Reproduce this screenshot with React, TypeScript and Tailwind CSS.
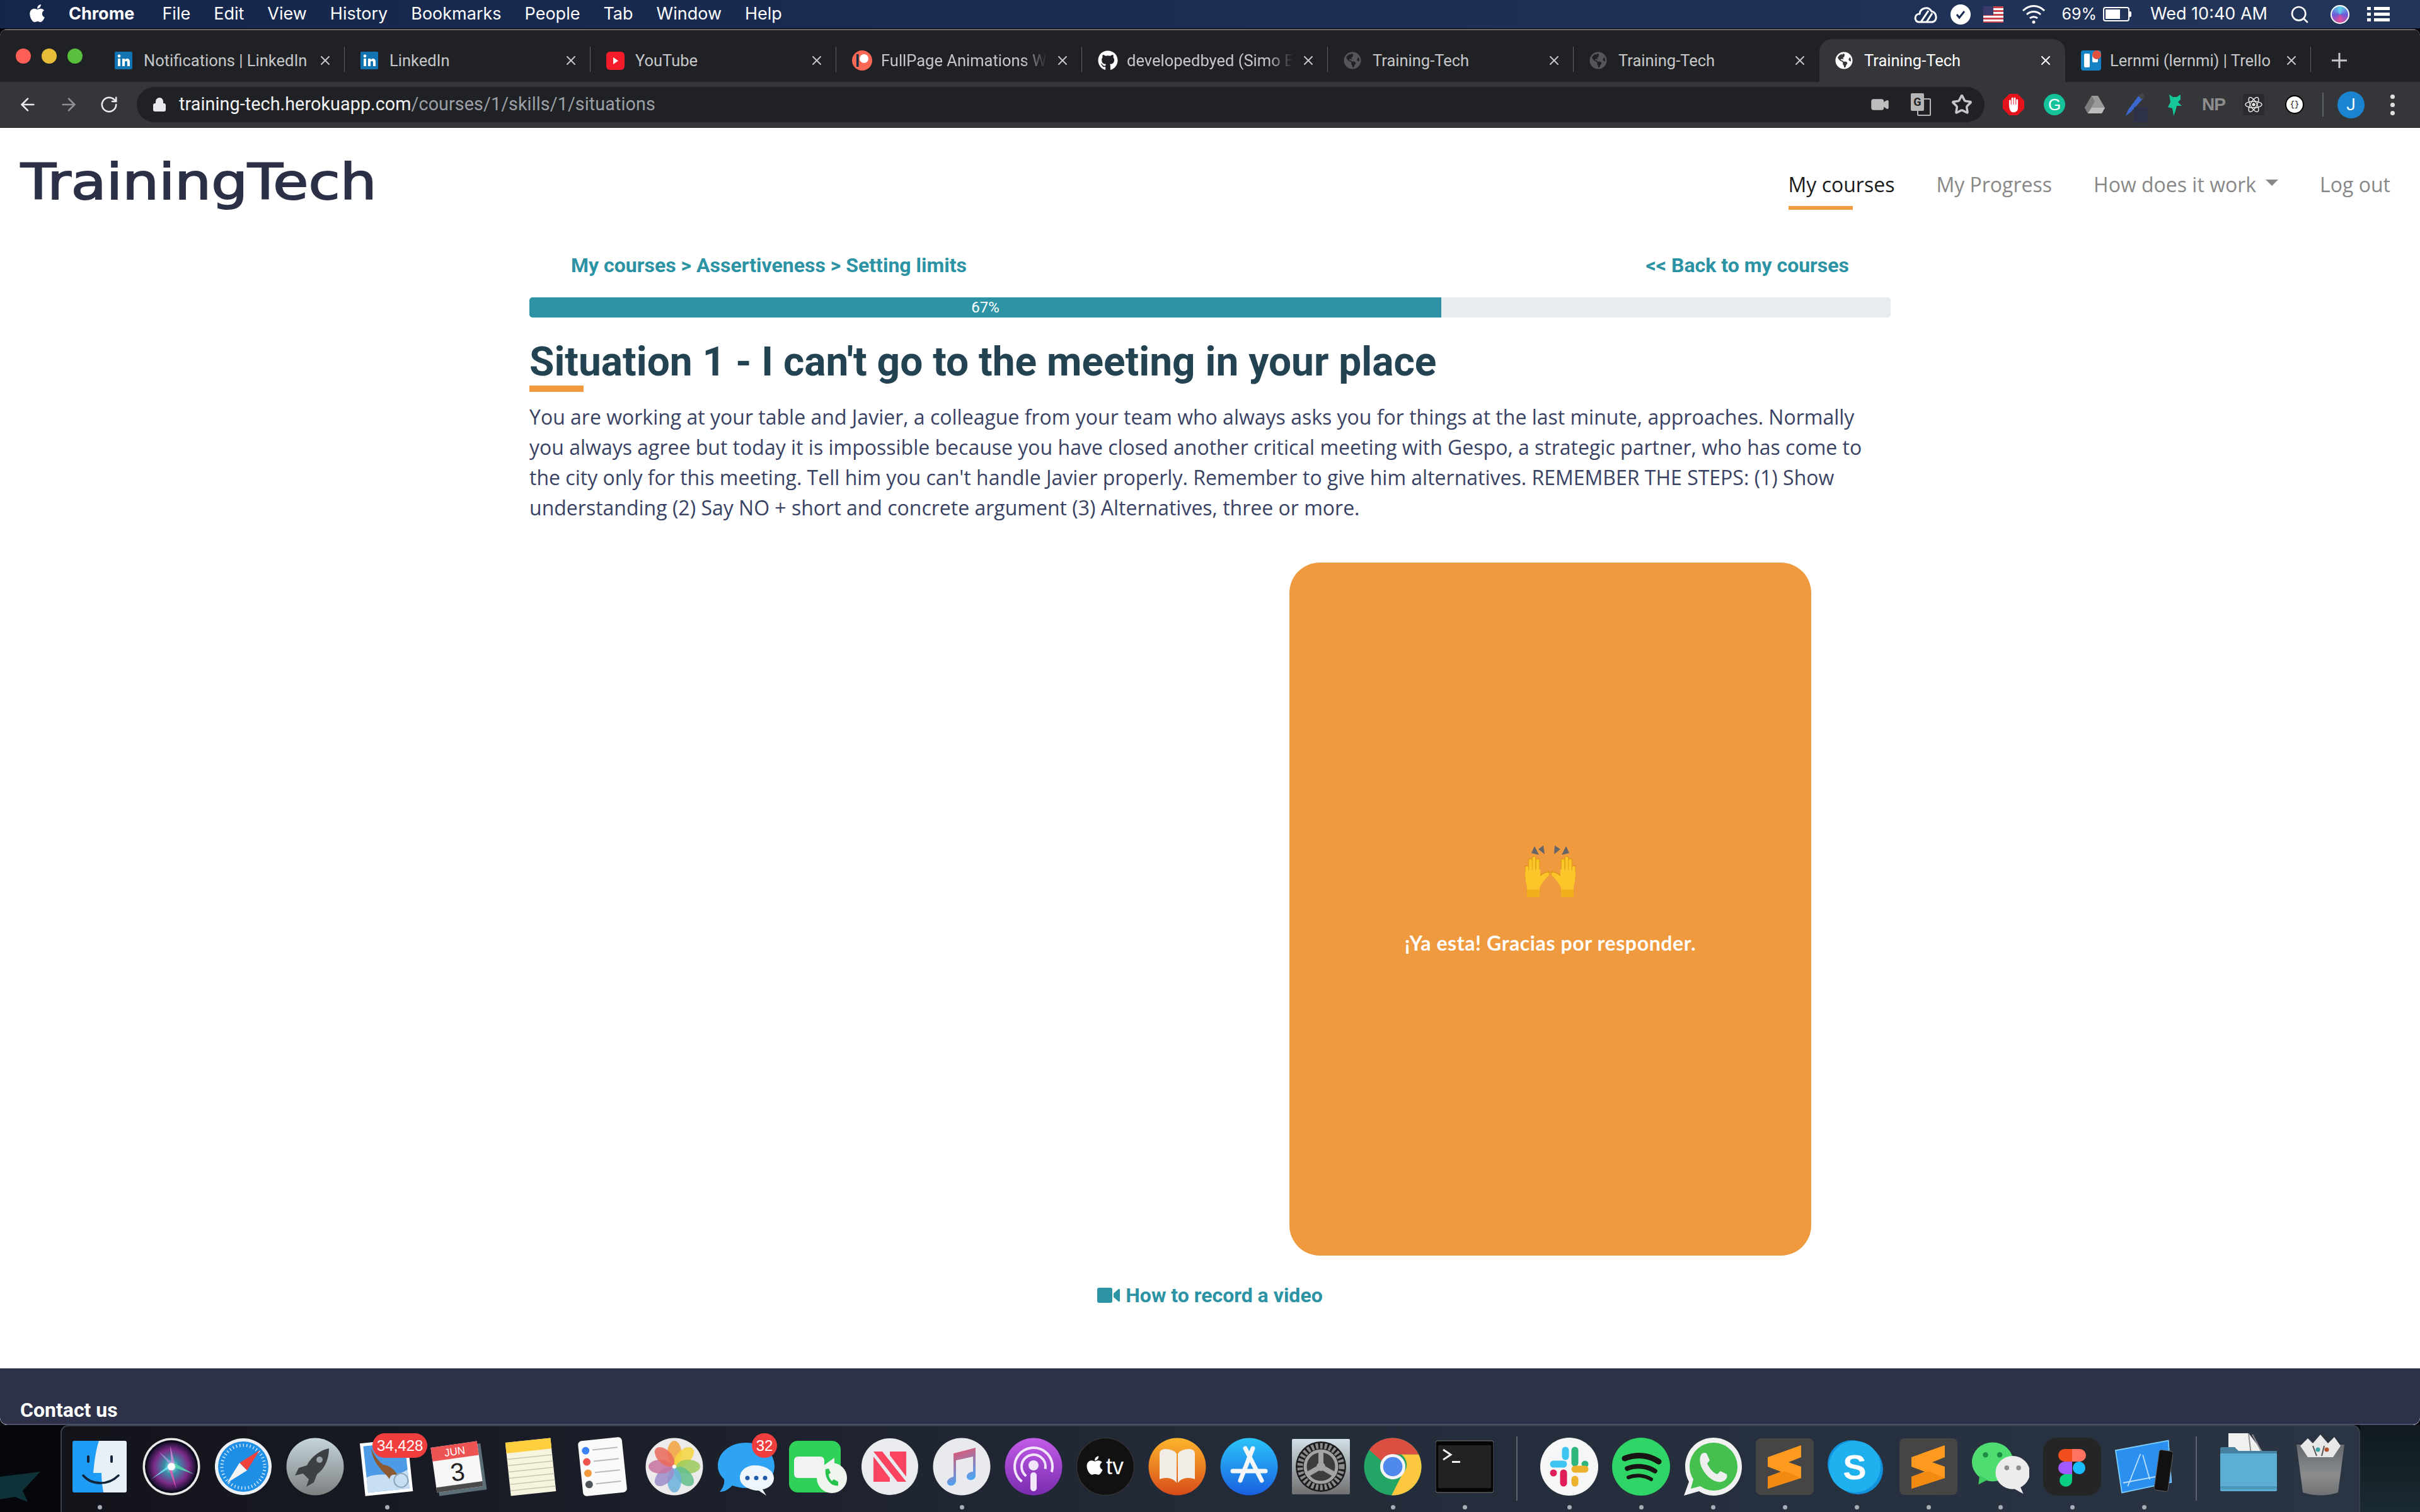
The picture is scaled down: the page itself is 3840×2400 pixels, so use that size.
import React from "react";
import { ArrowLeft, ArrowRight, Lock, RotateCw, Search, Star, Video, X } from "lucide-react";
import { FaApple, FaGithub, FaGlobeAmericas } from "react-icons/fa";

const Sublime = () => (
  <svg viewBox="0 0 92 92" className="w-full h-full">
    <rect x="0" y="1" width="92" height="90" rx="8" fill="#454545" />
    <path d="M72 12 V31 L52 39 L72 46 V64 L19 81 V62 L40 54 L19 46 V31Z" fill="#ff9a1f" />
    <path d="M72 64 L19 81 V62 L46 53Z" fill="#f28a12" />
  </svg>
);

const dockItems: { name: string; dot: boolean; icon: React.ReactNode; gapBefore?: boolean }[] = [
  {
    name: "Finder",
    dot: true,
    icon: (
      <svg viewBox="0 0 92 92" className="w-full h-full">
        <rect x="3" y="5" width="86" height="82" rx="3" fill="#1f9cf5" />
        <path d="M45 5 H86 a3 3 0 0 1 3 3 V84 a3 3 0 0 1 -3 3 H52 C50 74 49 66 49 56 H36 C38 36 40 20 45 5Z" fill="#e8f0f7" />
        <rect x="26" y="28" width="4" height="12" rx="2" fill="#12233a" />
        <rect x="63" y="28" width="4" height="12" rx="2" fill="#12233a" />
        <path d="M20 60 C34 76 60 76 76 60" stroke="#12233a" strokeWidth="3.5" fill="none" strokeLinecap="round" />
      </svg>
    ),
  },
  {
    name: "Siri",
    dot: false,
    icon: (
      <svg viewBox="0 0 92 92" className="w-full h-full">
        <defs>
          <radialGradient id="siriBg">
            <stop offset="0" stopColor="#9ff6ff" />
            <stop offset="0.3" stopColor="#3a8fa8" />
            <stop offset="0.7" stopColor="#7b2a86" />
            <stop offset="1" stopColor="#1a1030" />
          </radialGradient>
        </defs>
        <circle cx="46" cy="46" r="45.5" fill="#e8e8e8" />
        <circle cx="46" cy="46" r="42" fill="#0c0a1a" />
        <circle cx="46" cy="46" r="39" fill="url(#siriBg)" />
        <path d="M46 46 L44 12 L52 44Z" fill="#d88ad8" opacity="0.8" />
        <path d="M46 46 L82 58 L50 40Z" fill="#58e0b0" opacity="0.8" />
        <path d="M46 46 L54 82 L42 50Z" fill="#e85ab0" opacity="0.85" />
        <path d="M46 46 L14 66 L44 42Z" fill="#6fe8f5" opacity="0.85" />
        <path d="M46 46 L26 22 L50 42Z" fill="#b8a0e8" opacity="0.7" />
        <circle cx="46" cy="46" r="6" fill="#fff" />
      </svg>
    ),
  },
  {
    name: "Safari",
    dot: false,
    icon: (
      <svg viewBox="0 0 92 92" className="w-full h-full">
        <circle cx="46" cy="46" r="45" fill="#eef1f4" />
        <circle cx="46" cy="46" r="40" fill="#1f8fe6" />
        <circle cx="46" cy="46" r="34" fill="none" stroke="#cfe8fb" strokeWidth="5" strokeDasharray="1.5 4" />
        <path d="M72 20 L52 52 L40 40Z" fill="#f0413c" />
        <path d="M20 72 L40 40 L52 52Z" fill="#f4f4f4" />
      </svg>
    ),
  },
  {
    name: "Launchpad",
    dot: false,
    icon: (
      <svg viewBox="0 0 92 92" className="w-full h-full">
        <defs>
          <linearGradient id="lpBg" x1="0" y1="0" x2="0" y2="1">
            <stop offset="0" stopColor="#c5d6dc" />
            <stop offset="1" stopColor="#7d7f80" />
          </linearGradient>
        </defs>
        <circle cx="46" cy="46" r="45.5" fill="url(#lpBg)" />
        <path d="M68 17 C54 20 40 30 33 44 L20 48 L14 60 L27 57 L36 66 L32 78 L44 71 L49 58 C61 50 68 34 68 17Z" fill="#3e4144" />
        <circle cx="53" cy="35" r="5" fill="#9aa3a8" />
      </svg>
    ),
  },
  {
    name: "Mail",
    dot: true,
    icon: (
      <svg viewBox="0 0 92 92" className="w-full h-full">
        <g transform="rotate(-6 46 46)">
          <rect x="7" y="5" width="76" height="84" fill="#fff" />
          <rect x="12" y="10" width="66" height="74" fill="#4d9be6" />
          <path d="M12 60 C30 52 60 66 78 54 V84 H12Z" fill="#c8def2" />
          <path d="M24 14 C28 28 34 36 40 42 C50 44 58 52 62 62 C54 58 50 60 48 66 C44 58 38 54 34 46 C28 38 24 26 24 14Z" fill="#8b5a33" />
          <circle cx="66" cy="70" r="11" fill="none" stroke="#8ba5bd" strokeWidth="2" />
        </g>
      </svg>
    ),
  },
  {
    name: "Calendar",
    dot: false,
    icon: (
      <svg viewBox="0 0 92 92" className="w-full h-full">
        <g transform="rotate(-8 46 46)">
          <rect x="9" y="14" width="76" height="74" fill="#5c6e78" />
          <rect x="6" y="10" width="74" height="72" fill="#f7f7f7" />
          <rect x="6" y="10" width="74" height="22" fill="#ed5353" />
          <rect x="6" y="74" width="74" height="8" fill="#4b4b4b" />
          <text x="43" y="27" textAnchor="middle" fontFamily="'Liberation Sans',sans-serif" fontSize="17" fill="#fff">JUN</text>
          <text x="43" y="68" textAnchor="middle" fontFamily="'Liberation Sans',sans-serif" fontSize="40" fill="#222">3</text>
        </g>
      </svg>
    ),
  },
  {
    name: "Notes",
    dot: false,
    icon: (
      <svg viewBox="0 0 92 92" className="w-full h-full">
        <g transform="rotate(-6 46 46)">
          <rect x="10" y="4" width="72" height="85" fill="#f6f3df" />
          <rect x="10" y="4" width="72" height="17" fill="#fdcf3f" />
          {[30, 40, 50, 60, 70, 80].map((y) => (
            <rect key={y} x="10" y={y} width="72" height="1.5" fill="#c9c5ad" />
          ))}
        </g>
      </svg>
    ),
  },
  {
    name: "Reminders",
    dot: false,
    icon: (
      <svg viewBox="0 0 92 92" className="w-full h-full">
        <g transform="rotate(-6 46 46)">
          <rect x="11" y="2" width="70" height="88" rx="6" fill="#fafafa" />
          {[
            [18, "#3b82f6"],
            [36, "#ef5350"],
            [54, "#f19b3e"],
            [72, "#50555c"],
          ].map(([y, c]) => (
            <g key={y as number}>
              <circle cx="22" cy={y as number} r="6" fill={c as string} />
              <rect x="33" y={(y as number) - 1} width="40" height="2" fill="#bbb" />
            </g>
          ))}
        </g>
      </svg>
    ),
  },
  {
    name: "Photos",
    dot: false,
    icon: (
      <svg viewBox="0 0 92 92" className="w-full h-full">
        <circle cx="46" cy="46" r="45.5" fill="#eceaea" />
        {["#f4a23c", "#f5d63d", "#9ccb5b", "#63bd8a", "#6bb0dc", "#9d8dc9", "#c774a2", "#ea6a5b"].map((c, i) => (
          <ellipse key={c} cx="46" cy="24" rx="11" ry="19" fill={c} opacity="0.85" transform={`rotate(${i * 45} 46 46)`} />
        ))}
        <circle cx="46" cy="46" r="2.5" fill="#fff" />
      </svg>
    ),
  },
  {
    name: "Messages",
    dot: false,
    icon: (
      <svg viewBox="0 0 92 92" className="w-full h-full">
        <path d="M46 8 C72 8 91 24 91 45 C91 66 72 80 46 80 C38 80 30 78 24 76 C18 82 12 86 4 86 C9 80 12 74 11 66 C4 59 1 52 1 45 C1 24 20 8 46 8Z" fill="#2fa4f5" />
        <path d="M60 44 C76 44 90 52 90 64 C90 75 80 81 72 82 L78 92 L66 84 C52 84 36 76 36 64 C36 52 46 44 60 44Z" fill="#eef5fb" />
        <circle cx="48" cy="64" r="3.5" fill="#1f5aa8" />
        <circle cx="62" cy="64" r="3.5" fill="#1f5aa8" />
        <circle cx="76" cy="64" r="3.5" fill="#1f5aa8" />
      </svg>
    ),
  },
  {
    name: "FaceTime",
    dot: false,
    icon: (
      <svg viewBox="0 0 92 92" className="w-full h-full">
        <rect x="0" y="5" width="82" height="82" rx="14" fill="#2fd158" />
        <rect x="8" y="30" width="48" height="34" rx="6" fill="#f2f2f2" />
        <path d="M58 42 L72 32 V62 L58 52Z" fill="#f2f2f2" />
        <circle cx="68" cy="64" r="24" fill="#f0f5ee" />
        <path d="M58 50 C56 64 66 78 78 76 L78 70 L71 66 L68 69 C65 66 63 62 63 58 L66 56 L63 49Z" fill="#28c24e" />
      </svg>
    ),
  },
  {
    name: "News",
    dot: false,
    icon: (
      <svg viewBox="0 0 92 92" className="w-full h-full">
        <circle cx="46" cy="46" r="45" fill="#e9ebee" />
        <path d="M20 22 H34 L72 70 H58Z" fill="#fa4460" />
        <path d="M20 30 L46 64 V70 H20Z M72 22 V62 L46 28 V22Z" fill="#fa4460" />
      </svg>
    ),
  },
  {
    name: "Music",
    dot: true,
    icon: (
      <svg viewBox="0 0 92 92" className="w-full h-full">
        <defs>
          <linearGradient id="musicNote" x1="0" y1="0" x2="0.3" y2="1">
            <stop offset="0" stopColor="#f9485c" />
            <stop offset="1" stopColor="#4aa6f7" />
          </linearGradient>
        </defs>
        <circle cx="46" cy="46" r="45.5" fill="#e8eaee" />
        <path d="M33 25 L68 16 V60 C68 68 56 70 54 63 C53 57 60 54 64 54 V30 L37 36 V68 C37 77 25 79 23 72 C22 66 29 63 33 62Z" fill="url(#musicNote)" />
      </svg>
    ),
  },
  {
    name: "Podcasts",
    dot: false,
    icon: (
      <svg viewBox="0 0 92 92" className="w-full h-full">
        <defs>
          <linearGradient id="podBg" x1="0" y1="0" x2="0" y2="1">
            <stop offset="0" stopColor="#c25be8" />
            <stop offset="1" stopColor="#7a2cb0" />
          </linearGradient>
        </defs>
        <circle cx="46" cy="46" r="45.5" fill="url(#podBg)" />
        <circle cx="46" cy="46" r="30" fill="none" stroke="#f2e6fa" strokeWidth="4" strokeDasharray="130 60" transform="rotate(128 46 46)" />
        <circle cx="46" cy="46" r="19" fill="none" stroke="#f2e6fa" strokeWidth="4" strokeDasharray="80 40" transform="rotate(128 46 46)" />
        <circle cx="46" cy="44" r="8" fill="#f2e6fa" />
        <rect x="41" y="55" width="10" height="30" rx="5" fill="#f2e6fa" />
      </svg>
    ),
  },
  {
    name: "TV",
    dot: false,
    icon: (
      <svg viewBox="0 0 92 92" className="w-full h-full">
        <circle cx="46" cy="46" r="45.5" fill="#111" stroke="#333" strokeWidth="1.5" />
        <FaApple x="12" y="27" size={34} fill="#fff" />
        <text x="47" y="58" fontFamily="'Liberation Sans',sans-serif" fontSize="36" fill="#fff">tv</text>
      </svg>
    ),
  },
  {
    name: "Books",
    dot: false,
    icon: (
      <svg viewBox="0 0 92 92" className="w-full h-full">
        <defs>
          <linearGradient id="booksBg" x1="0" y1="0" x2="0" y2="1">
            <stop offset="0" stopColor="#fdb52c" />
            <stop offset="1" stopColor="#d84a18" />
          </linearGradient>
        </defs>
        <circle cx="46" cy="46" r="45.5" fill="url(#booksBg)" />
        <path d="M18 26 C18 20 22 18 28 18 C36 18 44 22 45 26 V72 C40 64 28 62 18 66Z" fill="#f1ede6" />
        <path d="M74 26 C74 20 70 18 64 18 C56 18 48 22 47 26 V72 C52 64 64 62 74 66Z" fill="#f1ede6" />
      </svg>
    ),
  },
  {
    name: "App Store",
    dot: false,
    icon: (
      <svg viewBox="0 0 92 92" className="w-full h-full">
        <defs>
          <linearGradient id="asBg" x1="0" y1="0" x2="0" y2="1">
            <stop offset="0" stopColor="#2bc4fa" />
            <stop offset="1" stopColor="#1a5fe0" />
          </linearGradient>
        </defs>
        <circle cx="46" cy="46" r="45.5" fill="url(#asBg)" />
        <path d="M52 17 L32 68 M40 17 L66 68 M20 53 H72" stroke="#f4f6f8" strokeWidth="7" strokeLinecap="round" fill="none" />
      </svg>
    ),
  },
  {
    name: "System Preferences",
    dot: false,
    icon: (
      <svg viewBox="0 0 92 92" className="w-full h-full">
        <defs>
          <linearGradient id="spBg" x1="0" y1="0" x2="0" y2="1">
            <stop offset="0" stopColor="#d3e0e7" />
            <stop offset="1" stopColor="#6f7071" />
          </linearGradient>
        </defs>
        <rect x="0" y="2" width="92" height="88" rx="2" fill="url(#spBg)" />
        <circle cx="46" cy="46" r="40" fill="#1d1d1f" />
        <circle cx="46" cy="46" r="33" fill="none" stroke="#8b8b8d" strokeWidth="9" strokeDasharray="4 3" />
        <circle cx="46" cy="46" r="25" fill="#3c3c3e" stroke="#a3a3a5" strokeWidth="5" />
        <path d="M46 46 V22 M46 46 L25 58 M46 46 L67 58" stroke="#a3a3a5" strokeWidth="8" />
        <circle cx="46" cy="46" r="7" fill="#a3a3a5" />
      </svg>
    ),
  },
  {
    name: "Chrome",
    dot: true,
    icon: (
      <svg viewBox="0 0 96 96" className="w-full h-full">
        <circle cx="48" cy="48" r="47.5" fill="#22a565" />
        <path d="M48 .5 A47.5 47.5 0 0 1 91 28 H48 A20 20 0 0 0 30 39 L9 20 A47.5 47.5 0 0 1 48 .5Z" fill="#db4f43" />
        <path d="M91 28 A47.5 47.5 0 0 1 46 95.5 L64 60 A20 20 0 0 0 62 28Z" fill="#fcc83f" />
        <circle cx="48" cy="48" r="21" fill="#f4f4f4" />
        <circle cx="48" cy="48" r="16" fill="#5089ee" />
      </svg>
    ),
  },
  {
    name: "Terminal",
    dot: true,
    icon: (
      <svg viewBox="0 0 92 92" className="w-full h-full">
        <rect x="0" y="5" width="92" height="82" rx="3" fill="#050505" stroke="#777" strokeWidth="1" />
        <rect x="4" y="12" width="84" height="68" fill="#222" />
        <path d="M12 19 L24 27 L12 35" stroke="#f0f0f0" strokeWidth="3" fill="none" />
        <rect x="26" y="37" width="13" height="3" fill="#f0f0f0" />
      </svg>
    ),
  },
  {
    name: "Slack",
    dot: true,
    gapBefore: true,
    icon: (
      <svg viewBox="0 0 92 92" className="w-full h-full">
        <circle cx="46" cy="46" r="46" fill="#f6f6f6" />
        <g strokeLinecap="round" strokeWidth="11" fill="none">
          <path d="M40 20 V30" stroke="#3ec4f0" />
          <path d="M21 42 H37" stroke="#3ec4f0" />
          <path d="M55 20 V40" stroke="#2eb67d" />
          <path d="M71 42 V42" stroke="#2eb67d" />
          <path d="M21 56 V56" stroke="#e01e5a" />
          <path d="M37 56 V72" stroke="#e01e5a" />
          <path d="M55 50 H71" stroke="#ecb22e" />
          <path d="M55 66 V72" stroke="#ecb22e" />
        </g>
      </svg>
    ),
  },
  {
    name: "Spotify",
    dot: true,
    icon: (
      <svg viewBox="0 0 92 92" className="w-full h-full">
        <circle cx="46" cy="46" r="46" fill="#2fd566" />
        <path d="M20 33 C38 26 58 27 74 38" stroke="#191414" strokeWidth="9" fill="none" strokeLinecap="round" />
        <path d="M24 49 C38 43 56 45 68 53" stroke="#191414" strokeWidth="7.5" fill="none" strokeLinecap="round" />
        <path d="M26 63 C38 58 52 60 62 66" stroke="#191414" strokeWidth="6" fill="none" strokeLinecap="round" />
      </svg>
    ),
  },
  {
    name: "WhatsApp",
    dot: true,
    icon: (
      <svg viewBox="0 0 92 92" className="w-full h-full">
        <path d="M47 0 C72 0 92 20 92 46 C92 72 72 92 47 92 C38 92 30 89 24 85 L0 92 L8 70 C4 63 2 55 2 46 C2 20 22 0 47 0Z" fill="#f1f1f1" />
        <path d="M47 8 C68 8 85 25 85 46 C85 67 68 84 47 84 C39 84 32 81 26 77 L11 81 L15 66 C11 60 9 53 9 46 C9 25 26 8 47 8Z" fill="#45c04f" />
        <path d="M28 26 C24 32 24 42 32 54 C40 66 52 72 60 70 C66 68 70 64 68 58 L58 53 L53 58 C46 56 40 48 37 41 L41 36 L36 25 C33 23 30 24 28 26Z" fill="#eee" />
      </svg>
    ),
  },
  { name: "Sublime Text", dot: true, icon: <Sublime /> },
  {
    name: "Skype",
    dot: true,
    icon: (
      <svg viewBox="0 0 92 92" className="w-full h-full">
        <circle cx="38" cy="42" r="38" fill="#0f8fdc" />
        <circle cx="48" cy="50" r="40" fill="#1292dc" />
        <circle cx="43" cy="46" r="41" fill="#1fb0ee" />
        <text x="43" y="66" textAnchor="middle" fontFamily="'Liberation Sans',sans-serif" fontWeight="700" fontSize="56" fill="#fff">S</text>
      </svg>
    ),
  },
  { name: "Sublime Text 2", dot: true, icon: <Sublime /> },
  {
    name: "WeChat",
    dot: true,
    icon: (
      <svg viewBox="0 0 98 92" className="w-full h-full">
        <ellipse cx="36" cy="38" rx="35" ry="33" fill="#4fdd72" />
        <path d="M14 60 L12 76 L28 68Z" fill="#3fcd63" />
        <circle cx="24" cy="26" r="4.5" fill="#1d8c45" />
        <circle cx="48" cy="26" r="4.5" fill="#1d8c45" />
        <ellipse cx="70" cy="56" rx="29" ry="28" fill="#ececec" />
        <path d="M82 78 L88 92 L70 82Z" fill="#ececec" />
        <circle cx="60" cy="48" r="4" fill="#8e8e8e" />
        <circle cx="80" cy="48" r="4" fill="#8e8e8e" />
      </svg>
    ),
  },
  {
    name: "Figma",
    dot: true,
    icon: (
      <svg viewBox="0 0 92 92" className="w-full h-full">
        <rect x="0" y="0" width="92" height="92" rx="22" fill="#252525" />
        <path d="M46 18 H34 a10 10 0 0 0 0 20 H46Z" fill="#f24e1e" />
        <path d="M46 18 H58 a10 10 0 0 1 0 20 H46Z" fill="#ff7262" />
        <path d="M46 38 H34 a10 10 0 0 0 0 20 H46Z" fill="#a259ff" />
        <circle cx="57" cy="48" r="10" fill="#1abcfe" />
        <path d="M34 58 H46 V68 a10 10 0 1 1 -12 -10Z" fill="#0acf83" />
      </svg>
    ),
  },
  {
    name: "Xcode",
    dot: true,
    icon: (
      <svg viewBox="0 0 100 92" className="w-full h-full">
        <path d="M1 18 L92 1 L97 73 L12 91Z" fill="#2a8fef" stroke="#7ccdfd" strokeWidth="2" />
        <path d="M44 24 L22 80 M48 26 L60 68" stroke="#b8dffb" strokeWidth="2" />
        <path d="M14 74 L88 60" stroke="#b8dffb" strokeWidth="2" />
        <rect x="72" y="18" width="24" height="70" rx="4" fill="#111" stroke="#666" strokeWidth="1" transform="rotate(8 84 52)" />
      </svg>
    ),
  },
  {
    name: "Downloads",
    dot: false,
    gapBefore: true,
    icon: (
      <svg viewBox="0 0 92 94" className="w-full h-full overflow-visible">
        <path d="M14 -6 H46 L72 28 H14Z" fill="#f0f0f0" />
        <path d="M46 -6 L50 28 M52 -4 L68 26" stroke="#8f8f8f" strokeWidth="2" />
        <path d="M1 19 a3 3 0 0 1 3 -3 H24 L30 22 H91 V40 H1Z" fill="#47809f" />
        <rect x="1" y="26" width="90" height="60" rx="2" fill="#5caed5" />
        <rect x="1" y="78" width="90" height="5" fill="#4c98bd" />
      </svg>
    ),
  },
  {
    name: "Trash",
    dot: false,
    icon: (
      <svg viewBox="0 0 92 94" className="w-full h-full overflow-visible">
        <defs>
          <linearGradient id="trashBg" x1="0" y1="0" x2="0" y2="1">
            <stop offset="0" stopColor="#666a6c" />
            <stop offset="0.6" stopColor="#8a8c8e" />
            <stop offset="1" stopColor="#6f7173" />
          </linearGradient>
        </defs>
        <path d="M8 12 H84 L74 88 Q46 97 18 88Z" fill="url(#trashBg)" />
        <path d="M14 14 L26 2 L34 10 L46 -4 L58 10 L68 0 L78 14 L66 32 H26Z" fill="#e8e8e8" />
        <path d="M34 14 L40 30 M52 14 L48 30" stroke="#555" strokeWidth="2" />
        <circle cx="42" cy="20" r="3.5" fill="#3aa3a3" />
        <circle cx="56" cy="20" r="3.5" fill="#b4552f" />
      </svg>
    ),
  },
];

type Tab = { title: string; fav: React.ReactNode; fade?: boolean; active?: boolean };

const linkedInFav = (
  <svg viewBox="0 0 28 28" className="w-[28px] h-[28px]">
    <rect width="28" height="28" rx="2" fill="#1274b3" />
    <rect x="5" y="11" width="4" height="12" fill="#fff" />
    <circle cx="7" cy="7" r="2.4" fill="#fff" />
    <path d="M12 11 H16 V13 C18 10 24 10 24 16 V23 H20 V17 C20 14 16 14 16 17 V23 H12Z" fill="#fff" />
  </svg>
);

const tabs: Tab[] = [
  { title: "Notifications | LinkedIn", fav: linkedInFav },
  { title: "LinkedIn", fav: linkedInFav },
  {
    title: "YouTube",
    fav: (
      <svg viewBox="0 0 29 29" className="w-[29px] h-[29px]">
        <rect width="29" height="29" rx="6" fill="#f61c2b" />
        <path d="M11 9 L19 14.5 L11 20Z" fill="#fff" />
      </svg>
    ),
  },
  {
    title: "FullPage Animations W",
    fade: true,
    fav: (
      <svg viewBox="0 0 32 32" className="w-[32px] h-[32px]">
        <circle cx="16" cy="16" r="16" fill="#f96854" />
        <circle cx="19" cy="13" r="7" fill="#fff" />
        <rect x="7" y="6" width="3.5" height="20" fill="#052d49" />
      </svg>
    ),
  },
  { title: "developedbyed (Simo E", fade: true, fav: <FaGithub size={32} className="text-white" /> },
  { title: "Training-Tech", fav: <FaGlobeAmericas size={28} className="text-[#54565a]" /> },
  { title: "Training-Tech", fav: <FaGlobeAmericas size={28} className="text-[#54565a]" /> },
  { title: "Training-Tech", active: true, fav: <FaGlobeAmericas size={28} className="text-white" /> },
  {
    title: "Lernmi (lernmi) | Trello",
    fav: (
      <svg viewBox="0 0 32 32" className="w-[32px] h-[32px]">
        <rect x="0" y="0" width="32" height="32" rx="4" fill="#1582c6" />
        <rect x="5" y="5" width="9" height="22" rx="2" fill="#fff" />
        <rect x="18" y="5" width="9" height="14" rx="2" fill="#fff" />
        <circle cx="25" cy="7" r="7" fill="#e2503f" />
      </svg>
    ),
  },
];

function HandsEmoji() {
  const hand = (
    <g>
      <g stroke="#dd9a10" strokeWidth="6.6" strokeLinecap="round">
        <path d="M5 52 V35" />
        <path d="M10.5 46 V24" />
        <path d="M16 46 V20" />
        <path d="M22 46 V24" />
        <path d="M26 50 L38 44" />
      </g>
      <path d="M5 82 V64 C2 56 2 46 2.5 40 L26 38 V47 L26 62 C26 64 25.5 66 25 68 V82Z" fill="#fcc52a" />
      <path d="M24 50 C30 46 34 43 38 43 C41 43 41 46 39 48 C33 54 28 60 25 68 L14 60Z" fill="#fcc52a" />
      <g stroke="#fcc52a" strokeWidth="4.6" strokeLinecap="round">
        <path d="M5 52 V35" />
        <path d="M10.5 46 V24" />
        <path d="M16 46 V20" />
        <path d="M22 46 V24" />
      </g>
      <rect x="5" y="70" width="20" height="12" fill="#efb01c" />
    </g>
  );
  return (
    <svg viewBox="0 0 84 82" className="w-[84px] h-[82px]">
      {hand}
      <g transform="translate(84 0) scale(-1 1)">{hand}</g>
      <path d="M12 12 L24 15 L17 1Z M31 0 L23 6 L33 14Z M49 0 L58 6 L48 14Z M67 1 L60 15 L72 12Z" fill="#66666a" />
    </svg>
  );
}

function ExtensionIcons() {
  return (
    <div className="flex items-center">
      <div className="w-[46px] flex justify-center">
        <svg viewBox="0 0 36 36" className="w-[34px] h-[34px]">
          <path d="M11 0 H25 L36 11 V25 L25 36 H11 L0 25 V11Z" fill="#e4131c" />
          <rect x="10.5" y="10" width="3" height="12" rx="1.5" fill="#fff" />
          <rect x="14.5" y="6" width="3" height="14" rx="1.5" fill="#fff" />
          <rect x="18.5" y="6" width="3" height="14" rx="1.5" fill="#fff" />
          <rect x="22.5" y="9" width="3" height="12" rx="1.5" fill="#fff" />
          <path d="M10.5 18 H25.5 V24 C25.5 29 21 31 18 31 C14 31 10.5 28 10.5 18Z" fill="#fff" />
        </svg>
      </div>
      <div className="w-[64px] ml-[10px] flex justify-center">
        <div className="w-[34px] h-[34px] rounded-full bg-[#15c39a] text-white flex items-center justify-center font-['Liberation_Sans',sans-serif] text-[26px] leading-none">
          G
        </div>
      </div>
      <div className="w-[64px] flex justify-center">
        <svg viewBox="0 0 34 30" className="w-[34px] h-[30px]">
          <path d="M12 1 H22 L33 20 L28 29 H6 L1 20Z" fill="#9a9a9a" />
          <path d="M12 1 L1 20 L6 29 L17 10Z" fill="#7c7c7c" />
          <path d="M12 20 H33 L28 29 H6Z" fill="#bdbdbd" />
        </svg>
      </div>
      <div className="w-[64px] flex justify-center relative">
        <svg viewBox="0 0 34 40" className="w-[34px] h-[40px]">
          <path d="M24 4 L30 10 L10 32 L2 38 L6 28Z" fill="#3c67cf" />
          <path d="M22 6 L28 1 L33 7 L27 12Z" fill="#444" />
        </svg>
        <div className="absolute left-[30px] top-[24px] w-[22px] h-[24px] bg-[#2d3149] rounded-[2px]" />
      </div>
      <div className="w-[61px] flex justify-center">
        <svg viewBox="0 0 26 36" className="w-[26px] h-[36px]">
          <path d="M4 2 L10 6 H16 L22 2 V10 L18 14 L24 20 L16 20 L14 28 L11 36 L9 24 L2 22 L6 14 Z" fill="#16c79a" />
        </svg>
      </div>
      <div className="w-[63px] text-center text-[#8e8e8e] font-['Liberation_Sans',sans-serif] font-bold text-[28px] leading-none tracking-[-1px]">
        NP
      </div>
      <div className="w-[64px] flex justify-center">
        <div className="w-[34px] h-[34px] bg-[#2a2b2e] rounded-[4px] flex items-center justify-center">
          <svg viewBox="0 0 30 30" className="w-[30px] h-[30px]" fill="none" stroke="#eee" strokeWidth="1.4">
            <ellipse cx="15" cy="15" rx="13" ry="5" />
            <ellipse cx="15" cy="15" rx="13" ry="5" transform="rotate(60 15 15)" />
            <ellipse cx="15" cy="15" rx="13" ry="5" transform="rotate(120 15 15)" />
            <circle cx="15" cy="15" r="2.5" fill="#eee" stroke="none" />
          </svg>
        </div>
      </div>
      <div className="w-[66px] flex justify-center">
        <div className="w-[30px] h-[30px] rounded-full bg-white border-[2px] border-black flex items-center justify-center text-black text-[12px] leading-none font-['Liberation_Mono',monospace]">
          {"{}"}
        </div>
      </div>
      <div className="w-[2px] h-[38px] bg-[#5f6368] ml-[11px]" />
      <div className="w-[43px] h-[43px] rounded-full bg-[#1a84d1] text-white flex items-center justify-center ml-[22px] text-[26px] font-['Roboto',sans-serif]">
        J
      </div>
      <div className="flex flex-col gap-[6px] ml-[41px] mr-[40px]">
        <div className="w-[7px] h-[7px] rounded-full bg-[#e0e0e0]" />
        <div className="w-[7px] h-[7px] rounded-full bg-[#e0e0e0]" />
        <div className="w-[7px] h-[7px] rounded-full bg-[#e0e0e0]" />
      </div>
    </div>
  );
}

export default function App() {
  return (
    <div className="w-[3840px] h-[2400px] relative overflow-hidden bg-[#05070c] flex flex-col">
      {/* mac menu bar */}
      <div className="h-[46px] shrink-0 bg-gradient-to-r from-[#15264b] via-[#1b2d53] to-[#233559] border-b-[1px] border-black flex items-center pl-[43px] pr-[48px] text-white font-['Inter',sans-serif] text-[27px]">
        <FaApple size={32} className="mb-[4px]" />
        <span className="font-bold ml-[34px]">Chrome</span>
        <div className="flex gap-[37px] ml-[44px]">
          {["File", "Edit", "View", "History", "Bookmarks", "People", "Tab", "Window", "Help"].map((m) => (
            <span key={m}>{m}</span>
          ))}
        </div>
        <div className="ml-auto flex items-center">
          <svg viewBox="0 0 40 32" className="w-[40px] h-[32px]" fill="none" stroke="#fff" strokeWidth="3">
            <path d="M10 28 C2 28 2 15 11 15 C12 6 24 2 30 11 C39 12 40 28 30 28 Z" />
            <path d="M13 28 L25 10 M22 28 L31 14" />
          </svg>
          <div className="w-[32px] h-[32px] rounded-full bg-white flex items-center justify-center ml-[20px]">
            <svg viewBox="0 0 20 20" className="w-[20px] h-[20px]" fill="none" stroke="#1b2d53" strokeWidth="3">
              <path d="M4 10 L8 15 L16 5" />
            </svg>
          </div>
          <div className="w-[32px] h-[26px] ml-[20px] bg-[repeating-linear-gradient(#c8434c_0px,#c8434c_3px,#fff_3px,#fff_6px)] relative">
            <div className="absolute left-0 top-0 w-[16px] h-[14px] bg-[#3c3b6e]" />
          </div>
          <svg viewBox="0 0 40 34" className="w-[40px] h-[34px] ml-[28px]" fill="none" stroke="#fff" strokeWidth="3">
            <path d="M3 11 C13 1 27 1 37 11" />
            <path d="M9 17 C15 11 25 11 31 17" />
            <path d="M14 23 C17 20 23 20 26 23" />
            <circle cx="20" cy="29" r="2.5" fill="#fff" stroke="none" />
          </svg>
          <span className="ml-[24px] text-[25px]">69%</span>
          <div className="ml-[10px] w-[42px] h-[23px] rounded-[4px] border-[2px] border-white p-[2px]">
            <div className="w-[69%] h-full bg-white" />
          </div>
          <div className="w-[3px] h-[9px] bg-white rounded-r-[2px]" />
          <span className="ml-[30px]">Wed 10:40 AM</span>
          <Search size={32} className="ml-[35px]" />
          <div className="w-[30px] h-[30px] ml-[33px] rounded-full bg-[conic-gradient(#5fd5e8,#6a5ad8,#e04f9c,#6a5ad8,#5fd5e8)] border-[2px] border-white" />
          <div className="flex flex-col gap-[4px] ml-[28px]">
            <div className="w-[36px] h-[5px] bg-[linear-gradient(to_right,#fff_6px,transparent_6px,transparent_11px,#fff_11px)]" />
            <div className="w-[36px] h-[5px] bg-[linear-gradient(to_right,#fff_6px,transparent_6px,transparent_11px,#fff_11px)]" />
            <div className="w-[36px] h-[5px] bg-[linear-gradient(to_right,#fff_6px,transparent_6px,transparent_11px,#fff_11px)]" />
          </div>
        </div>
      </div>

      {/* browser window */}
      <div className="h-[2216px] shrink-0 rounded-[12px] overflow-hidden flex flex-col bg-white">
        {/* tab strip */}
        <div className="h-[84px] shrink-0 bg-[#202124] border-t-[2px] border-[#6a6a6b] flex items-end font-['Roboto',sans-serif] text-[25.5px]">
          <div className="w-[157px] h-full flex items-center gap-[17px] pl-[25px] shrink-0">
            <div className="w-[24px] h-[24px] rounded-full bg-[#ff5f57] shrink-0" />
            <div className="w-[24px] h-[24px] rounded-full bg-[#e6bd38] shrink-0" />
            <div className="w-[24px] h-[24px] rounded-full bg-[#58c03c] shrink-0" />
          </div>
          {tabs.map((t, i) => (
            <div
              key={i}
              className={
                t.active
                  ? "w-[390px] h-[68px] pt-0 bg-[#35363a] rounded-t-[20px] flex items-center pl-[25px] text-white shrink-0"
                  : "w-[390px] h-[68px] flex items-center pl-[25px] text-[#c6c7c9] shrink-0 relative"
              }
            >
              <div className="w-[32px] flex justify-start shrink-0">{t.fav}</div>
              <div
                className={
                  t.fade
                    ? "w-[264px] ml-[14px] overflow-hidden whitespace-nowrap shrink-0 [mask-image:linear-gradient(to_right,black_85%,transparent)]"
                    : "w-[264px] ml-[14px] overflow-hidden whitespace-nowrap shrink-0"
                }
              >
                {t.title}
              </div>
              <X size={24} strokeWidth={2} className="ml-[12px] shrink-0" />
              {i !== 6 && i !== 7 && (
                <div className="absolute right-0 top-[12px] w-[1px] h-[40px] bg-[#5f6368]" />
              )}
            </div>
          ))}
          <div className="h-[68px] flex items-center pl-[32px] text-[#c6c7c9]">
            <svg viewBox="0 0 26 26" className="w-[26px] h-[26px]" fill="none" stroke="#c6c7c9" strokeWidth="3">
              <path d="M13 1 V25 M1 13 H25" />
            </svg>
          </div>
        </div>

        {/* toolbar */}
        <div className="h-[73px] shrink-0 bg-[#35363a] border-b-[1px] border-[#2a2b2e] flex items-center font-['Roboto',sans-serif]">
          <div className="flex items-center pl-[28px]">
            <ArrowLeft size={32} className="text-[#e8eaed]" />
            <ArrowRight size={32} className="text-[#8f9194] ml-[33px]" />
            <RotateCw size={30} className="text-[#e8eaed] ml-[33px]" />
          </div>
          <div className="w-[2932px] h-[56px] ml-[29px] rounded-full bg-[#202124] flex items-center pl-[24px] pr-[19px] shrink-0">
            <Lock size={24} className="text-[#e8eaed] fill-[#e8eaed]" />
            <span className="ml-[19px] text-[28.7px] tracking-[0.1px] text-[#f1f3f4]">
              training-tech.herokuapp.com<span className="text-[#9aa0a6]">/courses/1/skills/1/situations</span>
            </span>
            <div className="ml-auto flex items-center">
              <Video size={30} className="text-[#bdbdbd] fill-[#bdbdbd]" />
              <div className="relative w-[32px] h-[36px] ml-[34px]">
                <div className="absolute left-[10px] top-[8px] w-[22px] h-[28px] border-[2px] border-[#b5b5b5] rounded-[2px]" />
                <div className="absolute left-0 top-0 w-[21px] h-[28px] bg-[#b5b5b5] rounded-[2px] text-[#222] text-[18px] font-bold leading-[28px] text-center">
                  G
                </div>
              </div>
              <Star size={34} strokeWidth={2.5} className="text-[#c6c7c9] ml-[32px]" />
            </div>
          </div>
          <div className="ml-auto">
            <ExtensionIcons />
          </div>
        </div>

        {/* page */}
        <div className="flex-1 flex flex-col bg-white">
          <header className="h-[182px] shrink-0 flex items-center justify-between pl-[33px] pr-[47px] font-['Open_Sans',sans-serif] text-[32px] text-[#888]">
            <div className="font-['DejaVu_Sans',sans-serif] text-[78px] leading-none text-[#2c3047] mb-[10px] origin-left scale-x-[1.17] [-webkit-text-stroke:2px_#2c3047]">
              TrainingTech
            </div>
            <nav className="flex items-center gap-[66px] -mt-[2px]">
              <div className="relative text-[#1b1b1b]">
                My courses
                <div className="absolute left-0 top-[58px] w-[102px] h-[6px] bg-[#f19b3e]" />
              </div>
              <div>My Progress</div>
              <div className="flex items-center gap-[15px]">
                How does it work
                <div className="w-0 h-0 border-l-[10px] border-r-[10px] border-t-[10px] border-l-transparent border-r-transparent border-t-[#888] mb-[6px]" />
              </div>
              <div>Log out</div>
            </nav>
          </header>

          <main className="w-[2160px] mx-auto">
            <div className="h-[72px] flex items-center justify-between px-[66px] text-[32px] font-bold font-['Roboto',sans-serif] text-[#2b93a3]">
              <span>My courses &gt; Assertiveness &gt; Setting limits</span>
              <span>&lt;&lt; Back to my courses</span>
            </div>
            <div className="h-[32px] mt-[15px] rounded-[5px] overflow-hidden bg-[#e9ecef]">
              <div className="h-full w-[67%] bg-[#2d93a5] flex items-center justify-center text-white text-[24px] font-['Roboto',sans-serif]">
                67%
              </div>
            </div>
            <h1 className="mt-[33px] text-[64px] leading-[75px] font-bold font-['Roboto',sans-serif] text-[#234352]">
              Situation 1 - I can't go to the meeting in your place
            </h1>
            <div className="w-[86px] h-[10px] bg-[#f19b3e]" />
            <p className="mt-[16px] text-[32px] leading-[48px] font-['Open_Sans',sans-serif] text-[#3a4264]">
              You are working at your table and Javier, a colleague from your team who always asks you for things at the
              last minute, approaches. Normally you always agree but today it is impossible because you have closed another
              critical meeting with Gespo, a strategic partner, who has come to the city only for this meeting. Tell him
              you can't handle Javier properly. Remember to give him alternatives. REMEMBER THE STEPS: (1) Show
              understanding (2) Say NO + short and concrete argument (3) Alternatives, three or more.
            </p>

            <div className="grid grid-cols-2 mt-[63px]">
              <div />
              <div className="flex justify-center">
                <div className="w-[828px] h-[1100px] rounded-[48px] bg-[#f09a3f] flex flex-col items-center pt-[449px]">
                  <HandsEmoji />
                  <div className="mt-[49px] text-white text-[32px] font-bold font-['Lato',sans-serif] tracking-[0.6px]">
                    ¡Ya esta! Gracias por responder.
                  </div>
                </div>
              </div>
            </div>

            <div className="mt-[44px] flex items-center justify-center gap-[9px] text-[32px] leading-[38px] font-bold font-['Roboto',sans-serif] text-[#2b93a3]">
              <svg viewBox="0 0 36 24" className="w-[36px] h-[24px]" fill="#2b93a3">
                <rect x="0" y="0" width="24" height="24" rx="3" />
                <path d="M26 9 L34 2 Q36 1 36 4 V20 Q36 23 34 22 L26 15Z" />
              </svg>
              How to record a video
            </div>
          </main>

          <footer className="mt-auto h-[90px] shrink-0 bg-[#2d3149] border-b-[2px] border-[#4c5068] rounded-b-[12px] flex items-end pb-[6px] pl-[32px] text-white text-[32px] leading-none font-bold font-['Roboto',sans-serif]">
            Contact us
          </footer>
        </div>
      </div>

      {/* wallpaper bits behind the dock */}
      <svg viewBox="0 0 96 138" className="absolute left-0 top-[2262px] w-[96px] h-[138px]">
        <path d="M0 82 L64 74 L36 104 L44 122 L24 114 L0 118Z" fill="#0f3238" />
      </svg>
      <div className="absolute left-[3745px] top-[2262px] w-[95px] h-[138px] bg-gradient-to-b from-[#101a20] to-[#1a2a31]" />

      {/* dock */}
      <div className="absolute left-[96px] top-[2262px] w-[3649px] h-[138px] rounded-t-[12px] border-t-[2px] border-x-[2px] border-[#3a3f4a] bg-gradient-to-r from-[#13131a] via-[#232b39] to-[#2a3442] flex pl-[3px]">
        {dockItems.map((d) => (
          <React.Fragment key={d.name}>
            {d.gapBefore && (
              <div className="w-[52px] flex justify-center shrink-0 pt-[16px]">
                <div className="w-[2px] h-[102px] bg-[#5d636f]" />
              </div>
            )}
            <div className="w-[114px] shrink-0 flex flex-col items-center pt-[17px] relative">
              <div className="w-[92px] h-[94px]">{d.icon}</div>
              {d.dot && <div className="w-[7px] h-[7px] rounded-full bg-[#a9adb5] mt-[14px]" />}
              {d.name === "Mail" && (
                <div className="absolute left-[34px] top-[11px] h-[39px] px-[7px] rounded-full bg-[#f03d3d] text-white text-[24px] leading-[39px] font-['Liberation_Sans',sans-serif]">
                  34,428
                </div>
              )}
              {d.name === "Messages" && (
                <div className="absolute left-[66px] top-[11px] w-[40px] h-[39px] rounded-full bg-[#f03d3d] text-white text-[24px] leading-[39px] text-center font-['Liberation_Sans',sans-serif]">
                  32
                </div>
              )}
            </div>
          </React.Fragment>
        ))}
      </div>
    </div>
  );
}
